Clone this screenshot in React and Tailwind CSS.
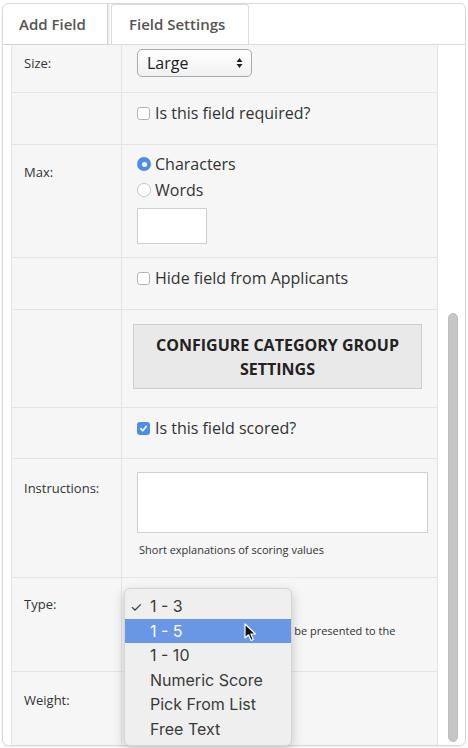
import { useState } from "react";

function Checkbox({ checked }) {
  if (checked) {
    return (
      <span className="w-[13px] h-[13px] rounded-[3px] bg-[#4f8ee6] flex items-center justify-center shrink-0">
        <svg width="9" height="9" viewBox="0 0 10 10">
          <path d="M2 5.2 L4.2 7.4 L8.2 2.6" fill="none" stroke="white" strokeWidth="1.8" strokeLinecap="round" strokeLinejoin="round" />
        </svg>
      </span>
    );
  }
  return <span className="w-[13px] h-[13px] rounded-[3px] border border-[#b5b5b5] bg-white shrink-0" />;
}

function Radio({ checked }) {
  if (checked) {
    return (
      <span className="w-[14px] h-[14px] rounded-full bg-[#4f8ee6] flex items-center justify-center shrink-0">
        <span className="w-[5px] h-[5px] rounded-full bg-white" />
      </span>
    );
  }
  return <span className="w-[14px] h-[14px] rounded-full border border-[#c4c4c4] bg-white shrink-0" />;
}

function Row({ label, h, children, labelPad = "pt-[18px]", cellPad = "" }) {
  return (
    <div className={`grid grid-cols-[110px_1fr] border-b border-[#e4e4e4] ${h}`}>
      <div className={`border-r border-[#e4e4e4] pl-[12px] text-[13px] text-[#333] ${labelPad}`}>{label}</div>
      <div className={`pl-[15px] ${cellPad}`}>{children}</div>
    </div>
  );
}

const options = ["1 - 3", "1 - 5", "1 - 10", "Numeric Score", "Pick From List", "Free Text"];

export default function App() {
  const [picked] = useState(0);
  const hover = 1;

  return (
    <div className="w-[468px] h-[748px] bg-white relative overflow-hidden" style={{ fontFamily: '"Open Sans", sans-serif' }}>
      <div className="mx-[2px] mt-[3px] h-[743px] border border-[#d9d9d9] rounded-[6px] flex flex-col overflow-hidden shadow-[0_1px_2px_rgba(0,0,0,0.08)]">
        {/* tabs */}
        <div className="h-[41px] border-b border-[#dcdcdc] flex items-end shrink-0">
          <div className="h-[40px] w-[105px] border-r border-[#d6d6d6] shadow-[1px_0_2px_rgba(0,0,0,0.12)] flex items-center pl-[16px] text-[15px] font-semibold text-[#555]">
            Add Field
          </div>
          <div className="ml-[3px] h-[40px] w-[138px] border-l border-r border-t border-[#dcdcdc] rounded-t-[3px] flex items-center pl-[17px] text-[15px] font-semibold text-[#555]">
            Field Settings
          </div>
        </div>

        {/* body */}
        <div className="flex-1 flex pl-[8px] min-h-0">
          <div className="w-[427px] border-l border-r border-[#e4e4e4] bg-[#f6f6f6] overflow-hidden flex flex-col">
            <Row label="Size:" h="h-[48px] shrink-0" labelPad="pt-[9px]" cellPad="pt-[4px]">
              <div className="w-[115px] h-[28px] rounded-[5px] border border-[#a9a9a9] bg-gradient-to-b from-white to-[#f1f1f1] flex items-center justify-between pl-[9px] pr-[8px] text-[16px] text-[#222]">
                <span>Large</span>
                <svg width="7" height="12" viewBox="0 0 7 12">
                  <path d="M3.5 1 L6.5 5 L0.5 5 Z M3.5 11 L6.5 7 L0.5 7 Z" fill="#222" />
                </svg>
              </div>
            </Row>

            <Row label="" h="h-[52px] shrink-0" cellPad="pt-[8px]">
              <div className="flex items-center gap-[5px] text-[16px] leading-[24px] text-[#333]">
                <Checkbox />
                <span>Is this field required?</span>
              </div>
            </Row>

            <Row label="Max:" h="h-[113px] shrink-0" cellPad="pt-[6px]">
              <div className="flex items-center gap-[4px] text-[16px] text-[#333] h-[26px]">
                <Radio checked />
                <span>Characters</span>
              </div>
              <div className="flex items-center gap-[4px] text-[16px] text-[#333] h-[26px]">
                <Radio />
                <span>Words</span>
              </div>
              <div className="mt-[5px] w-[70px] h-[36px] bg-white border border-[#cfcfcf]" />
            </Row>

            <Row label="" h="h-[52px] shrink-0" cellPad="pt-[8px]">
              <div className="flex items-center gap-[5px] text-[16px] leading-[24px] text-[#333]">
                <Checkbox />
                <span>Hide field from Applicants</span>
              </div>
            </Row>

            <Row label="" h="h-[98px] shrink-0" cellPad="pt-[14px] !pl-[11px]">
              <button className="w-[289px] h-[65px] bg-[#e9e9e9] border border-[#cdcdcd] text-[16px] font-bold text-[#222] leading-[24px] uppercase">
                Configure Category Group
                <br />
                Settings
              </button>
            </Row>

            <Row label="" h="h-[51px] shrink-0" cellPad="pt-[8px]">
              <div className="flex items-center gap-[5px] text-[16px] leading-[24px] text-[#333]">
                <Checkbox checked />
                <span>Is this field scored?</span>
              </div>
            </Row>

            <Row label="Instructions:" h="h-[119px] shrink-0" labelPad="pt-[20px]" cellPad="pt-[13px]">
              <div className="w-[291px] h-[61px] bg-white border border-[#cfcfcf]" />
              <p className="mt-[9px] pl-[2px] text-[11px] text-[#333]">Short explanations of scoring values</p>
            </Row>

            <Row label="Type:" h="h-[94px] shrink-0" labelPad="pt-[17px]" cellPad="pt-[14px]">
              <div className="w-[115px] h-[26px]" />
              <p className="mt-[4px] ml-[-2px] w-[280px] text-[11px] leading-[17px] text-[#333]">
                Select how scoring options will be presented to the reviewer.
              </p>
            </Row>

            <Row label="Weight:" h="h-[80px] shrink-0" labelPad="pt-[19px]" />
          </div>

          {/* scrollbar */}
          <div className="flex-1 flex justify-center pl-[3px] pt-[268px] pb-[3px]">
            <div className="w-[10px] h-full rounded-full bg-[#c6c6c6] border border-[#bdbdbd]" />
          </div>
        </div>
      </div>

      {/* open select menu */}
      <div className="absolute left-[124px] top-[588px] w-[168px] h-[158px] rounded-[6px] bg-[#efefef] border border-[#d4d4d4] shadow-[0_4px_12px_rgba(0,0,0,0.2)] pt-[5px]" style={{ fontFamily: "Inter, sans-serif" }}>
        {options.map((o, i) => (
          <div
            key={o}
            className={`h-[24.5px] flex items-center text-[16px] ${i === hover ? "bg-[#6a97e5] text-white" : "text-[#3a3a3a]"}`}
          >
            <span className="w-[25px] pl-[5px] text-[14px]">{i === picked ? "✓" : ""}</span>
            <span>{o}</span>
          </div>
        ))}
      </div>

      {/* mouse pointer */}
      <svg className="absolute left-[244px] top-[623px]" width="14" height="20" viewBox="0 0 14 20">
        <path d="M1 1 L1 15 L4.5 11.8 L7 17.5 L9.3 16.5 L6.9 11 L11.5 11 Z" fill="#111" stroke="white" strokeWidth="1.2" strokeLinejoin="round" />
      </svg>
    </div>
  );
}
